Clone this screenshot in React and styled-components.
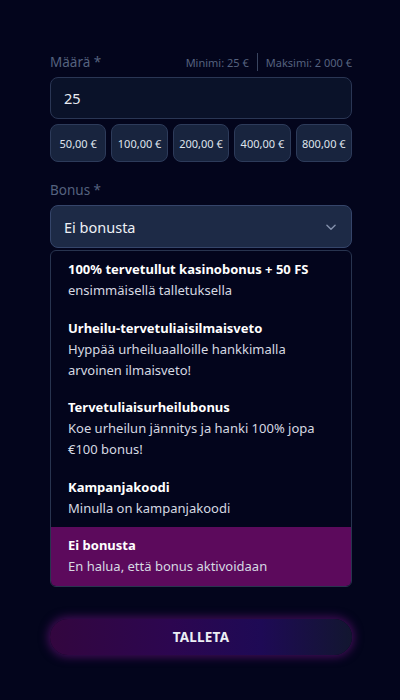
import React from "react";
import styled, { createGlobalStyle } from "styled-components";

const GlobalStyle = createGlobalStyle`
  html, body {
    margin: 0;
    padding: 0;
    background: #03051c;
  }
  body {
    font-family: "Noto Sans", "Open Sans", sans-serif;
    color: #ffffff;
  }
  * {
    box-sizing: border-box;
  }
`;

const Page = styled.div`
  width: 400px;
  min-height: 700px;
  background: #03051c;
  padding: 50px 48px 40px 50px;
  display: flex;
  flex-direction: column;
`;

const LabelRow = styled.div`
  display: flex;
  align-items: center;
  justify-content: space-between;
  height: 24px;
`;

const Label = styled.span`
  font-size: 13.5px;
  color: #55627f;
`;

const Limits = styled.div`
  display: flex;
  align-items: center;
  gap: 8px;
  font-size: 11px;
  color: #55627f;
`;

const Sep = styled.span`
  width: 1px;
  height: 18px;
  background: #3a4560;
`;

const Input = styled.div`
  margin-top: 3px;
  height: 42px;
  border-radius: 8px;
  border: 1px solid #2a3654;
  background: #0a1229;
  display: flex;
  align-items: center;
  padding: 0 13px;
  font-size: 14.5px;
  color: #e8ebf2;
`;

const Chips = styled.div`
  margin-top: 5px;
  display: grid;
  grid-template-columns: repeat(5, 1fr);
  gap: 5px;
`;

const Chip = styled.div`
  height: 38px;
  border-radius: 8px;
  border: 1px solid #2d3b5a;
  background: #18243e;
  display: flex;
  align-items: center;
  justify-content: center;
  font-size: 11px;
  color: #dfe3ec;
`;

const BonusLabel = styled(LabelRow)`
  margin-top: 16px;
`;

const Select = styled.div`
  margin-top: 3px;
  height: 43px;
  border-radius: 8px;
  border: 1px solid #35456a;
  background: #1d2a46;
  display: flex;
  align-items: center;
  justify-content: space-between;
  padding: 0 13px;
  font-size: 14.5px;
  color: #eef0f5;
`;

const List = styled.div`
  margin-top: 2px;
  border: 1px solid #28344f;
  border-radius: 6px;
  background: #03051c;
  overflow: hidden;
`;

const Item = styled.div`
  padding: 8px 17px 8.5px 17px;
  font-size: 13px;
  line-height: 21px;
  background: ${(p) => (p.$active ? "#5c0a5c" : "transparent")};
`;

const Title = styled.div`
  font-weight: 700;
  color: #ffffff;
`;

const Sub = styled.div`
  color: #d6d9e2;
`;

const Button = styled.button`
  margin-top: 32px;
  height: 36px;
  border: none;
  border-radius: 18px;
  background: linear-gradient(90deg, #33063f 0%, #2c0650 40%, #1e0a55 70%, #121630 100%);
  box-shadow: 0 0 10px 2px rgba(120, 20, 140, 0.55);
  color: #eceef4;
  font-family: inherit;
  font-weight: 700;
  font-size: 13.5px;
  letter-spacing: 0.2px;
`;

const amounts = ["50,00 €", "100,00 €", "200,00 €", "400,00 €", "800,00 €"];

const bonuses = [
  { title: "100% tervetullut kasinobonus + 50 FS", sub: "ensimmäisellä talletuksella" },
  { title: "Urheilu-tervetuliaisilmaisveto", sub: "Hyppää urheiluaalloille hankkimalla arvoinen ilmaisveto!" },
  { title: "Tervetuliaisurheilubonus", sub: "Koe urheilun jännitys ja hanki 100% jopa €100 bonus!" },
  { title: "Kampanjakoodi", sub: "Minulla on kampanjakoodi" },
  { title: "Ei bonusta", sub: "En halua, että bonus aktivoidaan", active: true },
];

const Chevron = () => (
  <svg width="14" height="14" viewBox="0 0 24 24" fill="none" stroke="#8491ad" strokeWidth="2.4" strokeLinecap="round" strokeLinejoin="round">
    <path d="M5 9l7 7 7-7" />
  </svg>
);

export default function App() {
  return (
    <>
      <GlobalStyle />
      <Page>
        <LabelRow>
          <Label>Määrä *</Label>
          <Limits>
            <span>Minimi: 25 €</span>
            <Sep />
            <span>Maksimi: 2 000 €</span>
          </Limits>
        </LabelRow>
        <Input>25</Input>
        <Chips>
          {amounts.map((a) => (
            <Chip key={a}>{a}</Chip>
          ))}
        </Chips>
        <BonusLabel>
          <Label>Bonus *</Label>
        </BonusLabel>
        <Select>
          <span>Ei bonusta</span>
          <Chevron />
        </Select>
        <List>
          {bonuses.map((b) => (
            <Item key={b.title} $active={b.active}>
              <Title>{b.title}</Title>
              <Sub>{b.sub}</Sub>
            </Item>
          ))}
        </List>
        <Button>TALLETA</Button>
      </Page>
    </>
  );
}
